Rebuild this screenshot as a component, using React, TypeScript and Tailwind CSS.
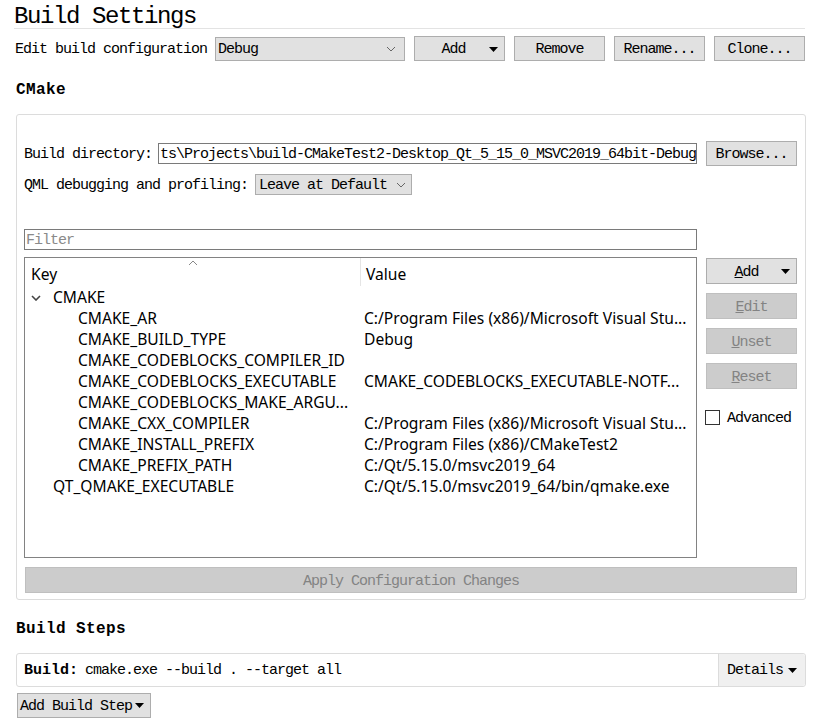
import React from "react";

const mono = { fontFamily: '"Liberation Mono", "DejaVu Sans Mono", monospace' };
const sans = { fontFamily: '"Noto Sans", "Open Sans", sans-serif' };

function Caret({ className = "" }: { className?: string }) {
  return (
    <svg width="9" height="5" viewBox="0 0 9 5" className={className}>
      <path d="M0 0 L9 0 L4.5 5 Z" fill="#000" />
    </svg>
  );
}

function Chevron() {
  return (
    <svg width="10" height="6" viewBox="0 0 10 6">
      <path d="M1 1 L5 5 L9 1" fill="none" stroke="#666" strokeWidth="1" />
    </svg>
  );
}

function Btn({ children, w = 91, disabled = false, className = "" }: { children: React.ReactNode; w?: number; disabled?: boolean; className?: string }) {
  return (
    <div
      className={`h-[25px] flex items-center justify-center pt-[4px] border text-[15px] tracking-[-1px] ${disabled ? "bg-[#cccccc] border-[#bfbfbf] text-[#838383]" : "bg-[#e1e1e1] border-[#adadad] text-black"} ${className}`}
      style={{ width: w, ...mono }}
    >
      {children}
    </div>
  );
}

const rows: { key: string; value: string; indent: number; group?: boolean }[] = [
  { key: "CMAKE", value: "", indent: 0, group: true },
  { key: "CMAKE_AR", value: "C:/Program Files (x86)/Microsoft Visual Stu...", indent: 2 },
  { key: "CMAKE_BUILD_TYPE", value: "Debug", indent: 2 },
  { key: "CMAKE_CODEBLOCKS_COMPILER_ID", value: "", indent: 2 },
  { key: "CMAKE_CODEBLOCKS_EXECUTABLE", value: "CMAKE_CODEBLOCKS_EXECUTABLE-NOTF...", indent: 2 },
  { key: "CMAKE_CODEBLOCKS_MAKE_ARGU...", value: "", indent: 2 },
  { key: "CMAKE_CXX_COMPILER", value: "C:/Program Files (x86)/Microsoft Visual Stu...", indent: 2 },
  { key: "CMAKE_INSTALL_PREFIX", value: "C:/Program Files (x86)/CMakeTest2", indent: 2 },
  { key: "CMAKE_PREFIX_PATH", value: "C:/Qt/5.15.0/msvc2019_64", indent: 2 },
  { key: "QT_QMAKE_EXECUTABLE", value: "C:/Qt/5.15.0/msvc2019_64/bin/qmake.exe", indent: 1 },
];

export default function App() {
  return (
    <div className="w-[831px] h-[725px] bg-white overflow-hidden text-black" style={mono}>
      {/* Title */}
      <div className="pl-[14px] pt-[4px] h-[28px] text-[24px] leading-[26px] tracking-[-1.4px]">Build Settings</div>
      <div className="ml-[14px] w-[791px] h-px bg-[#e3e3e3]" />

      {/* Config row */}
      <div className="flex items-center mt-[7px] h-[25px] pl-[15px] text-[15px] tracking-[-1px]">
        <span className="w-[200px] pt-[3px]">Edit build configuration</span>
        <div className="w-[190px] h-[24px] bg-[#e1e1e1] border border-[#adadad] flex items-center justify-between pl-[2px] pr-[8px]">
          <span className="pt-[3px]">Debug</span>
          <Chevron />
        </div>
        <Btn className="ml-[9px] relative">
          <span className="mr-[12px]">Add</span>
          <Caret className="absolute right-[6px] top-[10px]" />
        </Btn>
        <Btn className="ml-[9px]">Remove</Btn>
        <Btn className="ml-[9px]">Rename...</Btn>
        <Btn className="ml-[9px]">Clone...</Btn>
      </div>

      {/* CMake heading */}
      <div className="pl-[16px] mt-[19px] h-[20px] text-[16px] font-bold leading-[20px] tracking-[0.4px]">CMake</div>

      {/* Panel */}
      <div className="ml-[16px] mt-[14px] w-[790px] h-[486px] border border-[#dcdcdc] rounded-[3px] pl-[7px] text-[15px] tracking-[-1px]">
        <div className="flex items-center mt-[26px] h-[25px]">
          <span className="w-[134px] pt-[3px]">Build directory:</span>
          <div className="w-[539px] h-[21px] border border-[#7a7a7a] flex items-center pl-[1px] pt-[3px] overflow-hidden whitespace-nowrap">
            ts\Projects\build-CMakeTest2-Desktop_Qt_5_15_0_MSVC2019_64bit-Debug
          </div>
          <Btn className="ml-[9px]">Browse...</Btn>
        </div>
        <div className="flex items-center mt-[8px] h-[21px]">
          <span className="w-[231px] pt-[3px]">QML debugging and profiling:</span>
          <div className="w-[157px] h-[21px] bg-[#e1e1e1] border border-[#adadad] flex items-center justify-between pl-[3px] pr-[5px]">
            <span className="pt-[3px]">Leave at Default</span>
            <Chevron />
          </div>
        </div>
        <div className="mt-[34px] w-[673px] h-[21px] border border-[#7a7a7a] flex items-center pl-[1px] pt-[3px] text-[#8a8a8a]">Filter</div>

        <div className="flex mt-[7px]">
          {/* Tree */}
          <div className="relative w-[673px] h-[301px] border border-[#828282] tracking-normal" style={sans}>
            <svg width="10" height="6" viewBox="0 0 10 6" className="absolute left-[163px] top-[2px]">
              <path d="M1 5 L5 1 L9 5" fill="none" stroke="#888" strokeWidth="1" />
            </svg>
            <div className="flex h-[29px] text-[15.6px]">
              <div className="w-[335px] pl-[6px] pt-[5px]">Key</div>
              <div className="w-px h-[28px] bg-[#e5e5e5]" />
              <div className="pl-[5px] pt-[5px]">Value</div>
            </div>
            {rows.map((r) => (
              <div key={r.key} className="flex h-[21px] items-center text-[15.6px] whitespace-nowrap">
                <div className="w-[336px] flex items-center" style={{ paddingLeft: 6 + (r.indent === 2 ? 47 : r.indent === 1 ? 22 : 0) }}>
                  {r.group && (
                    <svg width="10" height="6" viewBox="0 0 10 6" className="mr-[12px]">
                      <path d="M1 1 L5 5 L9 1" fill="none" stroke="#444" strokeWidth="1.6" />
                    </svg>
                  )}
                  <span>{r.key}</span>
                </div>
                <div className="pl-[3px]">{r.value}</div>
              </div>
            ))}
          </div>

          {/* Side buttons */}
          <div className="ml-[9px] flex flex-col">
            <Btn className="mt-[1px] relative h-[26px]">
              <span className="mr-[10px]"><span className="underline">A</span>dd</span>
              <Caret className="absolute right-[6px] top-[10px]" />
            </Btn>
            <Btn disabled className="mt-[9px] h-[26px]"><span><span className="underline">E</span>dit</span></Btn>
            <Btn disabled className="mt-[9px] h-[26px]"><span><span className="underline">U</span>nset</span></Btn>
            <Btn disabled className="mt-[9px] h-[26px]"><span><span className="underline">R</span>eset</span></Btn>
            <div className="flex items-center mt-[16px] -ml-[1px]">
              <div className="w-[15px] h-[15px] border border-[#333] bg-white" />
              <span className="ml-[7px] pt-[3px]">Advanced</span>
            </div>
          </div>
        </div>

        <div className="mt-[9px] ml-[1px] w-[772px] h-[26px] bg-[#cccccc] border border-[#bfbfbf] flex items-center justify-center pt-[4px] text-[#838383]">
          Apply Configuration Changes
        </div>
      </div>

      {/* Build Steps */}
      <div className="pl-[16px] mt-[19px] h-[20px] text-[16px] font-bold leading-[20px] tracking-[0.4px]">Build Steps</div>
      <div className="ml-[16px] mt-[14px] w-[790px] h-[34px] border border-[#dcdcdc] rounded-[3px] flex text-[15px] tracking-[-1px]">
        <div className="flex-1 flex items-center pl-[7px] pt-[3px]">
          <span className="font-bold tracking-[0px]">Build:</span>
          <span className="ml-[7px]">cmake.exe --build . --target all</span>
        </div>
        <div className="w-[87px] bg-[#f0f0f0] border-l border-[#dcdcdc] flex items-center pl-[8px] gap-[5px] rounded-r-[3px]">
          <span className="pt-[3px]">Details</span>
          <Caret />
        </div>
      </div>
      <div className="ml-[17px] mt-[6px] w-[134px] h-[25px] bg-[#e1e1e1] border border-[#adadad] flex items-center pl-[2px] gap-[3px] text-[15px] tracking-[-1px]">
        <span className="pt-[3px]">Add Build Step</span>
        <Caret />
      </div>
    </div>
  );
}
